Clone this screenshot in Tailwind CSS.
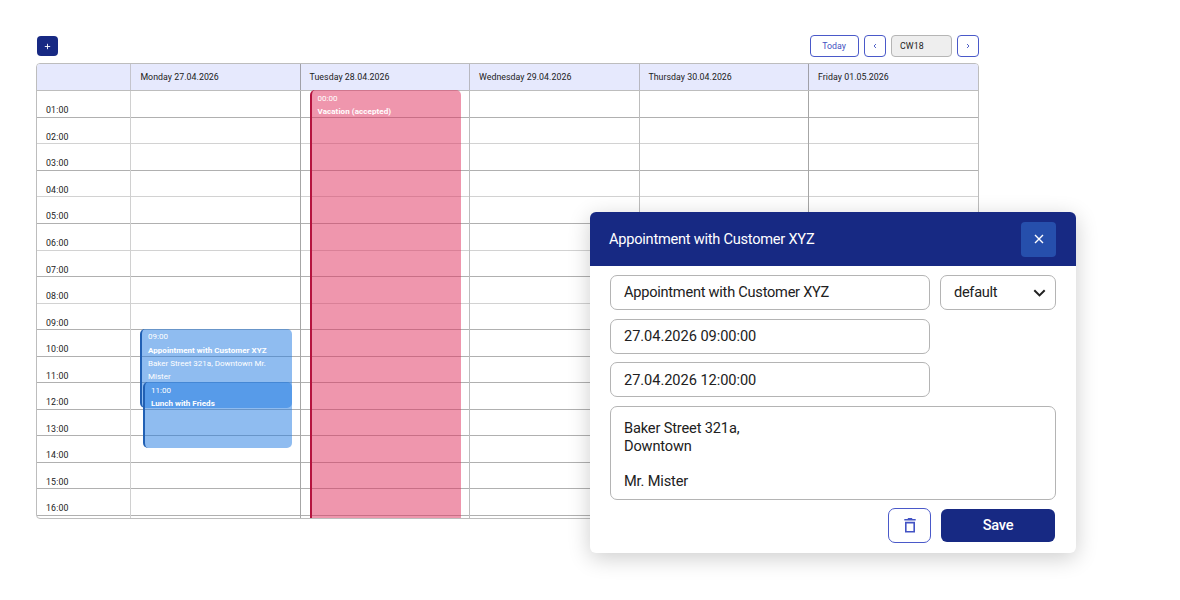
<!DOCTYPE html>
<html lang="en">
<head>
  <meta charset="UTF-8" />
  <meta name="viewport" content="width=device-width, initial-scale=1.0" />
  <title>Calendar</title>
  <script src="https://cdn.jsdelivr.net/npm/@tailwindcss/browser@4"></script>
</head>
<body class="relative h-[600px] overflow-hidden bg-white font-[Roboto,sans-serif] text-[8.8px] text-[#212121]">
  <div class="ml-[36px] w-[943px] pt-[35px]">
    <!-- Toolbar -->
    <div class="flex h-[28px] items-start justify-between pl-px">
      <button class="mt-px flex h-[20px] w-[21px] items-center justify-center rounded-[4px] bg-[#172983] text-white">
        <svg class="size-[7px]" viewBox="0 0 7 7" fill="none" stroke="currentColor" stroke-width="0.9"><path d="M3.5 0.8v5.4M0.8 3.5h5.4" /></svg>
      </button>
      <div class="flex text-[#3f51c1]">
        <button class="h-[22px] w-[49px] rounded-[4px] border border-[#4a59c9] pt-px pr-px text-[8.8px]">Today</button>
        <button class="ml-[5px] flex h-[22px] w-[22px] items-center justify-center rounded-[4px] border border-[#4a59c9]">
          <svg class="size-[6px]" viewBox="0 0 6 6" fill="none" stroke="currentColor" stroke-width="0.9"><path d="M4 1L2 3l2 2" /></svg>
        </button>
        <div class="ml-[5px] flex h-[22px] w-[61px] items-center rounded-[4px] border border-[#b5b5b5] bg-[#eeeeee] pt-px pl-2 tracking-[0.1px] text-[#212121]">CW18</div>
        <button class="ml-[5px] flex h-[22px] w-[22px] items-center justify-center rounded-[4px] border border-[#4a59c9]">
          <svg class="size-[6px]" viewBox="0 0 6 6" fill="none" stroke="currentColor" stroke-width="0.9"><path d="M2 1l2 2-2 2" /></svg>
        </button>
      </div>
    </div>

    <!-- Week table -->
    <div class="relative h-[456px] overflow-hidden rounded-[4px] border border-[#bdbdbd]">
      <div class="grid h-[27px] grid-cols-[94px_170px_169px_170px_169px_169px] border-b border-[#bdbdbd] bg-[#e6e9fd] leading-[26px] tracking-[0.04px]">
        <div class="border-r border-[#c4c4cc]"></div>
        <div class="border-r border-[#a0a0a8] pl-[9.4px]">Monday 27.04.2026</div>
        <div class="border-r border-[#b8b8c0] pl-[8.6px]">Tuesday 28.04.2026</div>
        <div class="border-r border-[#b8b8c0] pl-[9px]">Wednesday 29.04.2026</div>
        <div class="border-r border-[#a0a0a8] pl-[8.4px]">Thursday 30.04.2026</div>
        <div class="pl-[9px]">Friday 01.05.2026</div>
      </div>
      <div id="rows"></div>

      <!-- Events -->
      <div class="absolute top-[26px] left-[273px] h-[440px] w-[151px] rounded-[5px] border-l-2 border-[#b5143f] bg-[#e0315f]/51 pt-[1.6px] pl-[5.5px] text-[8px] leading-[13.3px] text-white">
        <div>00:00</div>
        <div class="font-bold tracking-[0.08px]">Vacation (accepted)</div>
      </div>
      <div class="absolute top-[265px] left-[103px] h-[79px] w-[152px] rounded-[5px] border-l-2 border-[#2160b4] bg-[#2079e1]/50 pt-[1.4px] pl-[6px] text-[8px] leading-[13.3px] text-white">
        <div>09:00</div>
        <div class="font-bold tracking-[0.03px]">Appointment with Customer XYZ</div>
        <div class="w-[130px]">Baker Street 321a, Downtown Mr. Mister</div>
      </div>
      <div class="absolute top-[318px] left-[106px] h-[66px] w-[149px] rounded-[5px] border-l-2 border-[#2160b4] bg-[#2079e1]/50 pt-[1.6px] pl-[6px] text-[8px] leading-[13.3px] text-white">
        <div>11:00</div>
        <div class="font-bold tracking-[0.03px]">Lunch with Frieds</div>
      </div>
    </div>
  </div>

  <!-- Appointment dialog -->
  <div class="absolute top-[212px] left-[590px] h-[341px] w-[486px] overflow-hidden rounded-[6px] bg-white text-[14.6px] shadow-[0_5px_22px_rgba(0,0,0,0.2)]">
    <div class="flex h-[54px] items-center justify-between bg-[#172983] pr-5 pl-[19px] text-white">
      <span class="pt-px tracking-[-0.24px]">Appointment with Customer XYZ</span>
      <button class="flex size-[35px] items-center justify-center rounded-[4px] bg-[#264fac]">
        <svg class="size-[10px]" viewBox="0 0 10 10" fill="none" stroke="currentColor" stroke-width="1.4"><path d="M1 1l8 8M9 1L1 9" /></svg>
      </button>
    </div>
    <div class="flex flex-col pt-[9px] pr-5 pl-[19.5px]">
      <div class="flex gap-[10px]">
        <div class="flex h-[35px] w-[320px] items-center rounded-[7px] border border-[#b4b4b4] pl-[13.5px] tracking-[-0.25px]">Appointment with Customer XYZ</div>
        <div class="flex h-[35px] w-[116.5px] items-center justify-between rounded-[7px] border border-[#b4b4b4] pr-[9px] pl-[13.5px] tracking-[-0.3px]">
          <span>default</span>
          <svg class="h-[8px] w-[13px]" viewBox="0 0 13 8" fill="none" stroke="currentColor" stroke-width="2"><path d="M1.3 1.2l5.2 5.2 5.2-5.2" /></svg>
        </div>
      </div>
      <div class="mt-[9px] flex h-[35px] w-[320px] items-center rounded-[7px] border border-[#b4b4b4] pl-[13.5px] tracking-[-0.05px]">27.04.2026 09:00:00</div>
      <div class="mt-[8px] flex h-[35px] w-[320px] items-center rounded-[7px] border border-[#b4b4b4] pt-[2px] pl-[13.5px] tracking-[-0.05px]">27.04.2026 12:00:00</div>
      <div class="mt-[9px] h-[94px] w-[446.5px] rounded-[7px] border border-[#b4b4b4] pt-[13px] pl-[13.5px] leading-[17.6px] tracking-[-0.15px]">
        <p>Baker Street 321a,</p>
        <p>Downtown</p>
        <br />
        <p>Mr. Mister</p>
      </div>
    </div>
    <div class="flex items-center justify-end gap-[10px] pt-[8px] pr-[21px]">
      <button class="flex h-[35px] w-[43px] items-center justify-center rounded-[7px] border border-[#4a59c9] text-[#4353c4]">
        <svg class="h-[15px] w-[12px]" viewBox="0 0 12 15" fill="none" stroke="currentColor" stroke-width="1.6"><path d="M0.3 1.8h11.4M3.8 0.9h4.4M1.8 4.6h8.4v9.2H1.8z" /></svg>
      </button>
      <button class="h-[33px] w-[114px] rounded-[6px] bg-[#172983] font-medium tracking-[-0.3px] text-white">Save</button>
    </div>
  </div>

<script>
  const rows = document.getElementById("rows");
  const heights = [27, 26, 27, 26, 27, 27, 26, 27, 26, 27, 26, 27, 26, 27, 26, 27, 10];

  heights.forEach((height, i) => {
    const row = document.createElement("div");
    const last = i === heights.length - 1;
    row.className = "grid grid-cols-[94px_170px_169px_170px_169px_169px] border-b " +
      (i < 8 && i % 2 === 1 ? "border-[#d2d2d2]" : "border-[#b0b0b0]");
    row.style.height = height + "px";
    row.innerHTML = `
      <div class="border-r border-[#d0d0d0] pt-[7px] pl-[9px] leading-[24px] tracking-[0.15px]">${last ? "" : String(i + 1).padStart(2, "0") + ":00"}</div>
      <div class="border-r border-[#a6a6a6]"></div>
      <div class="border-r border-[#bdbdbd]"></div>
      <div class="border-r border-[#bdbdbd]"></div>
      <div class="border-r border-[#a6a6a6]"></div>
      <div></div>
    `;
    rows.appendChild(row);
  });
</script>

</body>
</html>
